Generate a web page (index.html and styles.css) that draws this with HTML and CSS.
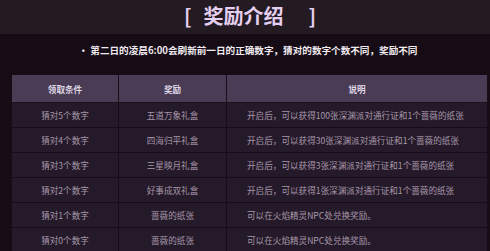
FILE: index.html
```html
<!DOCTYPE html>
<html lang="zh">
<head>
<meta charset="utf-8">
<link rel="stylesheet" href="styles.css">
</head>
<body>
<div class="top"><h1 class="title"><span class="br-l">[</span><span>奖励介绍</span><span class="br-r">]</span></h1></div>
<div class="main">
  <p class="note">• 第二日的凌晨6:00会刷新前一日的正确数字，猜对的数字个数不同，奖励不同</p>
  <table class="reward">
    <thead>
      <tr><th class="c1">领取条件</th><th class="c2">奖励</th><th class="c3">说明</th></tr>
    </thead>
    <tbody>
      <tr><td>猜对5个数字</td><td>五道万象礼盒</td><td class="desc">开启后，可以获得100张深渊派对通行证和1个蔷薇的纸张</td></tr>
      <tr><td>猜对4个数字</td><td>四海归平礼盒</td><td class="desc">开启后，可以获得30张深渊派对通行证和1个蔷薇的纸张</td></tr>
      <tr><td>猜对3个数字</td><td>三星映月礼盒</td><td class="desc">开启后，可以获得3张深渊派对通行证和1个蔷薇的纸张</td></tr>
      <tr><td>猜对2个数字</td><td>好事成双礼盒</td><td class="desc">开启后，可以获得1张深渊派对通行证和1个蔷薇的纸张</td></tr>
      <tr><td>猜对1个数字</td><td>蔷薇的纸张</td><td class="desc">可以在火焰精灵NPC处兑换奖励。</td></tr>
      <tr><td>猜对0个数字</td><td>蔷薇的纸张</td><td class="desc">可以在火焰精灵NPC处兑换奖励。</td></tr>
    </tbody>
  </table>
</div>
</body>
</html>
```
FILE: styles.css
```css
html, body {
  margin: 0;
  padding: 0;
  background: #150c15;
  font-family: "Noto Sans CJK SC", "Noto Sans", sans-serif;
}
.top {
  height: 34px;
  background: #231a22;
  display: flex;
  justify-content: center;
  align-items: center;
}
.title {
  margin: 0 0 2px;
  padding-left: 10px;
  font-size: 20px;
  line-height: 24px;
  font-weight: 700;
  color: #e4cff0;
  display: flex;
}
.br-l { margin-right: 12px; }
.br-r { margin-left: 25px; }
.note {
  margin: 0;
  padding: 10px 5px 18px 11px;
  line-height: 12px;
  font-size: 9.6px;
  font-weight: 700;
  color: #f1eaf0;
  text-align: center;
}
.reward {
  margin-left: 11px;
  width: 477px;
  border-collapse: collapse;
  table-layout: fixed;
}
.reward th, .reward td {
  border: 1px solid #160d17;
  padding: 0;
  text-align: center;
  font-size: 8.6px;
}
.reward th {
  height: 27px;
  background: #4a3c55;
  color: #ddd5e3;
  font-weight: 700;
  border-bottom: 1px solid #1a111c;
}
.reward td {
  height: 24px;
  background: #251a29;
  color: #a797a9;
}
.reward .c1 { width: 106px; }
.reward .c2 { width: 107px; }
.reward td.desc {
  text-align: left;
  padding-left: 20px;
}
```
